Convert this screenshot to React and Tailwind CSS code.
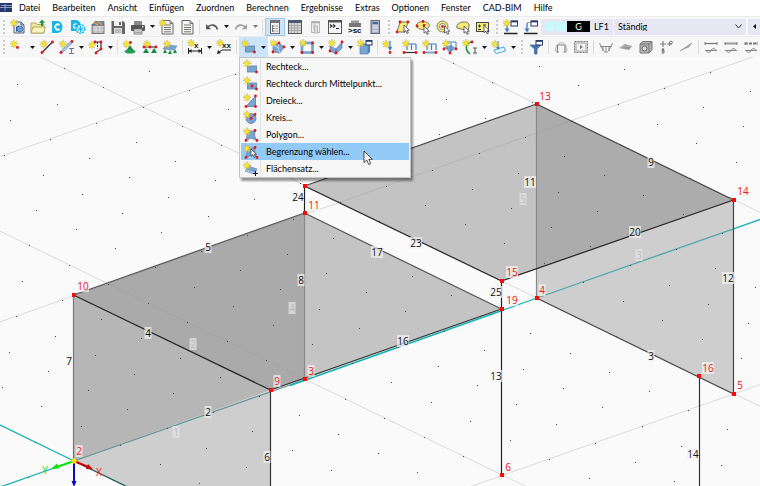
import React from "react";

/* ---------- small drawing helpers for icons ---------- */

const Icon = ({ children }) => (
  <svg width="16" height="16" viewBox="0 0 16 16" fill="none" className="shrink-0" aria-hidden="true">
    {children}
  </svg>
);

const Star = ({ x = 4, y = 4 }) => (
  <g transform={`translate(${x} ${y})`}>
    <path d="M0-4.2V4.2M-4.2 0H4.2M-3-3L3 3M3-3L-3 3" stroke="#b9b48a" strokeWidth="0.8" />
    <path d="M0-3.6L1-1.2 3.4-1 1.5.6 2.2 3 0 1.8-2.2 3-1.5.6-3.4-1-1-1.2Z" fill="#fbe62a" stroke="#e0c61c" strokeWidth="0.4" />
  </g>
);

const Dots = ({ at }) => at.map(([x, y]) => <circle key={`${x}-${y}`} cx={x} cy={y} r="1.4" fill="#e0161b" />);

const Hand = ({ x = 9, y = 7 }) => (
  <path transform={`translate(${x} ${y})`} d="M0 0V7.2L1.8 5.6 3 8.4 4.3 7.8 3.2 5.2H5.4Z" fill="#fff" stroke="#444" strokeWidth="0.8" />
);

const BLUE = "#79a5d2";
const DARK = "#5f7fa6";
const GREY = "#808080";

const NewModel = () => (
  <Icon>
    <path d="M4 3H11L14 6V14H4Z" fill="#dce6f3" stroke="#5c6370" />
    <path d="M11 3V6H14" stroke="#5c6370" />
    <path d="M6 8L9 6.5V11L6 13Z" fill="#2b5b9e" />
    <circle cx="10" cy="10" r="3" fill="#6f9bd0" stroke="#2b5b9e" strokeWidth="0.6" />
    <Star x={4} y={4} />
  </Icon>
);
const OpenFolder = () => (
  <Icon>
    <path d="M1 4H6L7 5.500H14V14H1Z" fill="#f2e7a4" stroke="#b5a85c" />
    <path d="M3 8H15.500L13.500 14H1Z" fill="#fbf3bd" stroke="#b5a85c" />
    <path d="M12 7V3" stroke="#1d9a3c" strokeWidth="2" />
    <path d="M9 4L12 .5 15 4Z" fill="#1d9a3c" />
  </Icon>
);
const CloudC = () => (
  <Icon>
    <path d="M2 2H8C14 3 14 13 8 14H2Z" fill="#19b5e5" />
    <path d="M9.500 6A2.600 2.600 0 1 0 9.500 10" stroke="#fff" strokeWidth="1.800" />
  </Icon>
);
const CloudGear = () => (
  <Icon>
    <path d="M1 1H6C9 1.500 11 4 11 7L8 12H1Z" fill="#19b5e5" />
    <path d="M6.500 5A2.300 2.300 0 1 0 6 9.500" stroke="#fff" strokeWidth="1.400" />
    <circle cx="10.500" cy="10" r="4.300" fill="#dff4fb" stroke="#19b5e5" strokeWidth="1.500" strokeDasharray="2 1" />
    <path d="M10.500 7V13M7.900 8.500L13.100 11.500M13.100 8.500L7.900 11.500" stroke="#19b5e5" />
  </Icon>
);
const ModelManager = () => (
  <Icon>
    <rect x="2" y="6" width="12" height="8.500" fill="#b9b9b9" stroke="#777" />
    <path d="M2 6L5 2.500H14V6Z" fill="#6d8bb3" stroke="#4d5f78" strokeWidth="0.700" />
    <path d="M4 3.500L8 6M8 2.500L12 6" stroke="#d99c3d" strokeWidth="1.500" />
    <path d="M3 8H14M3 11H14M6 7V14M10 7V14" stroke="#eee" strokeWidth="0.700" />
  </Icon>
);
const Save = () => (
  <Icon>
    <path d="M1.500 2H13L15 4V15H1.500Z" fill="#666" />
    <rect x="4" y="2" width="8" height="5" fill="#eee" />
    <rect x="4" y="9" width="8" height="6" fill="#ddd" />
    <rect x="9" y="3" width="2" height="3" fill="#666" />
    <path d="M5 11H11M5 13H11" stroke="#888" strokeWidth="0.800" />
  </Icon>
);
const Print = () => (
  <Icon>
    <rect x="4" y="2" width="8" height="4" fill="#8b8b8b" />
    <rect x="1" y="6" width="14" height="6" rx="1" fill="#555" />
    <rect x="4" y="10" width="8" height="5" fill="#ececec" stroke="#666" strokeWidth="0.800" />
    <path d="M5 12H11M5 13.500H11" stroke="#888" strokeWidth="0.700" />
    <rect x="12" y="7" width="1.500" height="1.500" fill="#ddd" />
  </Icon>
);
const Report = ({ star }) => (
  <Icon>
    <path d="M3 1.500H11L14 4.500V15H3Z" fill="#f5f5f3" stroke="#666" />
    <path d="M11 1.500V4.500H14M5 6H12M5 8.500H12M5 10.500H12M5 12.800H12" stroke="#666" strokeWidth="0.900" />
    {star && <Star x={3.5} y={4} />}
  </Icon>
);
const Undo = ({ flip }) => (
  <Icon>
    <g transform={flip ? "translate(16 0) scale(-1 1)" : undefined} opacity={flip ? 0.55 : 1}>
      <path d="M3.500 8.500C6 5 12 5 13.500 10.500" stroke="#555" strokeWidth="1.600" />
      <path d="M2 5V10.200H7.200Z" fill="#555" />
    </g>
  </Icon>
);
const Navigator = () => (
  <Icon>
    <rect x="3.500" y="1.500" width="9" height="13" fill="#f0f0f0" stroke="#666" />
    <rect x="3.500" y="1.500" width="9" height="2.500" fill="#777" />
    <path d="M5.500 6V13M6 7H7.500M6 9.500H7.500M6 12H7.500" stroke="#555" strokeWidth="0.800" />
    <path d="M8.500 7H11M8.500 9.500H11M8.500 12H11" stroke="#888" strokeWidth="0.800" />
  </Icon>
);
const TableIcon = () => (
  <Icon>
    <rect x="1.500" y="1.500" width="13" height="13" fill="#d8d8d8" stroke="#555" />
    <rect x="1.500" y="1.500" width="13" height="2.500" fill="#4b5a78" />
    <path d="M2 6.500H14M2 9H14M2 11.500H14M4.500 4V14M7.500 4V14M10.500 4V14" stroke="#999" strokeWidth="0.700" />
  </Icon>
);
const PanelIcon = () => (
  <Icon>
    <rect x="4.500" y="2.500" width="8" height="11" fill="#eee" stroke="#bbb" />
    <path d="M4.500 3.500H12.500" stroke="#aaa" strokeWidth="1.500" />
    <path d="M6 6H9M6 8H9M6 10H8" stroke="#bbb" />
    <rect x="7.500" y="7" width="3" height="7" fill="#ddd" stroke="#aaa" strokeWidth="0.700" />
  </Icon>
);
const ConsoleIcon = () => (
  <Icon>
    <rect x="1.500" y="1.500" width="13" height="13" fill="#f3f3f3" stroke="#555" />
    <rect x="1.500" y="1.500" width="13" height="2" fill="#555" />
    <path d="M3 5.500L5 7 3 8.500M6 5.500L8 7 6 8.500M9 9.500H12" stroke="#222" strokeWidth="1.100" />
  </Icon>
);
const ScriptIcon = () => (
  <Icon>
    <rect x="4" y="1.500" width="8" height="4" fill="#999" />
    <rect x="2" y="4" width="12" height="4" fill="#777" />
    <text x="1" y="14" fontSize="8" fontWeight="700" fill="#111" fontFamily="Liberation Sans, sans-serif">&gt;sc</text>
  </Icon>
);
const ServerIcon = () => (
  <Icon>
    <rect x="4" y="1.500" width="8.500" height="13" fill="#a7b3c2" stroke="#666" />
    <rect x="5.500" y="3" width="5.500" height="2" fill="#3f6da8" />
    <path d="M5.500 7H11M5.500 9H11M5.500 12H11" stroke="#eef" />
  </Icon>
);
const YELLOW = "#f6ec74";
const SelPara = () => (
  <Icon>
    <path d="M5 3H13L10 13H2Z" fill={YELLOW} stroke="#555" strokeWidth="0.800" />
    <Dots at={[[5, 3], [13, 3], [2, 13]]} />
    <Hand x={9} y={6} />
  </Icon>
);
const SelEllipse = () => (
  <Icon>
    <ellipse cx="8" cy="6.500" rx="6.500" ry="4" fill={YELLOW} stroke="#666" strokeWidth="0.800" />
    <Dots at={[[8, 2.5], [2, 7], [9, 6.5]]} />
    <Hand x={9} y={7} />
  </Icon>
);
const SelRing = () => (
  <Icon>
    <circle cx="7.500" cy="7.500" r="5.500" fill={YELLOW} stroke="#666" strokeWidth="0.800" />
    <circle cx="7.500" cy="7.500" r="3" fill="#fff" stroke="#666" strokeWidth="0.800" />
    <Dots at={[[7.5, 7.5]]} />
    <Hand x={9.5} y={7} />
  </Icon>
);
const SelLasso = () => (
  <Icon>
    <path d="M2 9C1 6 4 3.500 8 3 12 2.500 14.500 4 14 7L13 12 8 10.500Z" fill={YELLOW} stroke="#555" strokeWidth="0.800" />
    <Hand x={9} y={7} />
  </Icon>
);
const SelBox = () => (
  <Icon>
    <rect x="1.500" y="3.500" width="12" height="9" fill={YELLOW} stroke="#444" />
    <path d="M3 7H6M4.500 5.500V8.500M3 10.500H6M8 6H11" stroke="#333" />
    <Hand x={9} y={6.5} />
  </Icon>
);
const LoadIcon = ({ star }) => (
  <Icon>
    <path d="M1 14.500H14.500" stroke="#222" strokeWidth="1.500" />
    <path d="M4 4V11" stroke="#3f7fca" strokeWidth="1.300" />
    <path d="M1.500 9.500H6.500L4 13.500Z" fill="#3f7fca" />
    <rect x="8" y="2" width="6.500" height="5" fill="#fff" stroke="#283b6b" />
    <path d="M8 2.500H14.500" stroke="#283b6b" strokeWidth="1.800" />
    <path d="M4 3.500H8" stroke="#666" strokeWidth="0.600" />
    {star && <Star x={3.5} y={4} />}
  </Icon>
);

const NodeIcon = () => (<Icon><Star x={4} y={5} /><Dots at={[[7.500, 8.500]]} /></Icon>);
const LineIcon = () => (
  <Icon><path d="M3 13.500L13.500 3" stroke="#333" strokeWidth="1.200" /><Star x={5} y={5} /><Dots at={[[3, 13.5], [13.5, 3]]} /></Icon>
);
const MemberIcon = () => (
  <Icon>
    <path d="M2 13.500L12.500 3" stroke="#7ba0d3" strokeWidth="3" />
    <path d="M2 13.500L12.500 3" stroke="#d7e5f6" />
    <path d="M10 9.500H15M12.500 9.500V14.500M10 14.500H15" stroke="#5d7fae" />
    <Star x={4} y={5} /><Dots at={[[2, 13.5], [13, 2.5]]} />
  </Icon>
);
const PolylineIcon = () => (
  <Icon>
    <path d="M6 3H13V10L8 13.500" stroke="#333" strokeWidth="1.200" />
    <path d="M9.500 3V9.500" stroke="#333" strokeDasharray="2 1" />
    <Star x={4} y={6} /><Dots at={[[7, 3], [13, 3], [13, 10], [8, 14]]} />
  </Icon>
);
const NodalSupport = () => (
  <Icon><path d="M8 6L12 12H4Z" fill="#188a45" /><ellipse cx="8" cy="12.500" rx="5.500" ry="2" fill="#1e9e50" /><Star x={4.500} y={5} /><Dots at={[[8.5, 3.5]]} /></Icon>
);
const LineSupport = () => (
  <Icon><path d="M2 8H14" stroke="#222" /><path d="M4 9L7 14H1ZM12 9L15 14H9Z" fill="#188a45" /><Star x={5} y={5} /><Dots at={[[2, 8], [14, 8], [8, 8]]} /></Icon>
);
const SurfaceSupport = () => (
  <Icon><path d="M4 6L15 7 12 11 1 10Z" fill={BLUE} stroke={DARK} strokeWidth="0.600" /><path d="M3 10L5 14H1ZM8 11L10 15H6ZM13 10L15 14H11Z" fill="#188a45" /><Star x={5} y={5} /></Icon>
);
const DimX = () => (
  <Icon><path d="M1.500 9V15M14.500 9V15M2 12H14" stroke="#222" /><path d="M1.500 12L4.500 10V14ZM14.500 12L11.500 10V14Z" fill="#222" /><text x="7" y="9" fontSize="8" fontWeight="700" fill="#222" fontFamily="Liberation Sans, sans-serif">x</text><Star x={4} y={4} /></Icon>
);
const DimXX = () => (
  <Icon><path d="M2 14L6 11H15" stroke="#222" /><path d="M1 15L2 11 5 14Z" fill="#222" /><text x="6" y="9" fontSize="8" fontWeight="700" fill="#222" fontFamily="Liberation Sans, sans-serif">xx</text><Star x={4} y={4} /></Icon>
);
const SurfRect = () => (
  <Icon><rect x="4.500" y="7" width="9" height="6" fill={BLUE} stroke={DARK} strokeWidth="0.800" /><Star x={4} y={4.500} /><Dots at={[[13.5, 13]]} /></Icon>
);
const SurfCenter = () => (
  <Icon><rect x="4.500" y="7" width="9" height="6" fill={BLUE} stroke={DARK} strokeWidth="0.800" /><Star x={4} y={4.500} /><Dots at={[[9, 10], [13.5, 13]]} /></Icon>
);
const SurfTri = () => (
  <Icon><path d="M12.500 3V13.500H3Z" fill={BLUE} stroke={DARK} strokeWidth="0.800" /><Star x={4} y={4.500} /><Dots at={[[12.5, 3], [12.5, 13.5], [3, 13.5]]} /></Icon>
);
const SurfCircle = () => (
  <Icon><circle cx="8" cy="8.500" r="5" fill={BLUE} stroke={DARK} strokeWidth="0.800" /><path d="M8 8.500L12 4.500" stroke="#456" strokeWidth="0.700" /><Star x={4} y={4.500} /><Dots at={[[8, 8.5], [12, 4.5]]} /></Icon>
);
const SurfPoly = ({ pick }) => (
  <Icon>
    <path d="M5 4H12L11.500 9 14 13.500 8 11 3 13.500Z" fill={BLUE} stroke={DARK} strokeWidth="0.800" />
    <Star x={4} y={4.500} /><Dots at={[[12, 3.5], [14, 13.5], [3, 13.5]]} />
    {pick && <Hand x={8} y={5} />}
  </Icon>
);
const SurfSet = () => (
  <Icon><path d="M5 5L14 8 12 12 3 9Z" fill={BLUE} stroke={DARK} strokeWidth="0.600" /><path d="M4 8L13 11 11 13 2 10Z" fill="#a8c6e6" stroke={DARK} strokeWidth="0.600" /><path d="M10 12.500H15M12.500 10V15" stroke="#111" /><Star x={4} y={4.500} /></Icon>
);
const Solid = () => (
  <Icon><path d="M3 6L9 4 14 8 10 14 3 13Z" fill={BLUE} stroke={DARK} strokeWidth="0.700" /><path d="M9 4L8 9 10 14M8 9L3 6" stroke="#d7e5f6" strokeWidth="0.700" /><Star x={3.500} y={4} /><Dots at={[[9, 4], [14, 8], [3, 13]]} /></Icon>
);
const Opening = () => (
  <Icon><rect x="3" y="4" width="10.500" height="9.500" fill="#fff" stroke={BLUE} strokeWidth="2.800" /><Star x={4} y={4} /><Dots at={[[13.5, 4], [13.5, 13.5], [3, 13.5]]} /></Icon>
);
const Intersect = () => (
  <Icon><path d="M2 7L8 10V15L2 12ZM8 10L14 3V9L8 15Z" fill={BLUE} stroke={DARK} strokeWidth="0.700" /><Star x={4} y={4} /><Dots at={[[14, 3], [8, 14], [2, 12]]} /></Icon>
);
const Block = () => (
  <Icon><path d="M3 7L5 5H13L11 7V15H3Z" fill={BLUE} stroke={DARK} strokeWidth="0.700" /><path d="M11 7L13 5V13L11 15Z" fill="#4d7fb8" /><rect x="9" y="1.500" width="6" height="4.500" fill="#fff" stroke="#283b6b" /><path d="M9 2H15" stroke="#283b6b" strokeWidth="1.600" /><Star x={3.500} y={4} /></Icon>
);
const NodeLoad = () => (
  <Icon><path d="M8 2V10" stroke="#3f7fca" strokeWidth="1.300" /><path d="M5.800 8H10.200L8 12Z" fill="#3f7fca" /><Star x={4} y={5} /><Dots at={[[8, 13.5]]} /></Icon>
);
const LineLoad = ({ blue }) => (
  <Icon><path d="M3 5H14M5 5V11M9.500 5V11M14 5V11" stroke="#3f7fca" strokeWidth="1.200" /><path d="M2 13.500H14" stroke={blue ? BLUE : "#333"} strokeWidth={blue ? 2 : 1.200} /><Star x={4} y={4.500} /><Dots at={[[2, 13.5], [14, 13.5]]} /></Icon>
);
const SurfLoad = () => (
  <Icon><path d="M2 8L9 6 14 9 8 14Z" fill={BLUE} /><path d="M5 3H14V11M9 4V12M5 4V10" stroke="#3f7fca" /><Star x={4} y={4.500} /><Dots at={[[14, 10], [8, 14], [2, 10]]} /></Icon>
);
const Imperfection = () => (
  <Icon><path d="M9 3C3 5 3 11 8 15" stroke="#1d8f45" strokeWidth="1.600" /><path d="M11 9H15M13 9V14M11 14H15" stroke="#555" /><Star x={4} y={4} /><Dots at={[[10, 3]]} /></Icon>
);
const FreeLoad = () => (
  <Icon><path d="M3 11L13 8 14.500 12 5 14.500Z" stroke="#4da6da" fill="#eaf6fd" /><path d="M7 2V9" stroke="#3f7fca" strokeWidth="1.200" /><path d="M5 8H9L7 11Z" fill="#3f7fca" /><Star x={4} y={5} /></Icon>
);
const Filter = () => (
  <Icon><path d="M2 6H13L9 10V15H6.500V10Z" fill="#3f74b8" stroke="#2d578d" strokeWidth="0.600" /><rect x="8" y="1.500" width="6.500" height="4.500" fill="#fff" stroke="#283b6b" /><path d="M8 2H14.500" stroke="#283b6b" strokeWidth="1.700" /></Icon>
);
const Frame = () => (<Icon><path d="M4.500 13V6H12V13M3 13H6M10.500 13H13.500" stroke={GREY} strokeWidth="1.100" /><path d="M2.500 12C2.500 1 14 1 14 12" stroke="#aaa" strokeWidth="0.900" /></Icon>);
const Film = () => (<Icon><rect x="1.500" y="2.500" width="13" height="11" fill="#c9c9c9" stroke={GREY} strokeDasharray="2 1" /><rect x="4" y="5" width="8" height="6" fill="#f4f4f4" /><path d="M7 5.800V10.200L10 8Z" fill={GREY} /></Icon>);
const Curve = () => (<Icon><path d="M1.500 4L5 11C6.500 14 9.500 14 11 11L14.500 4M2 7.500H14M5 7V12M8 8V13M11 7V12" stroke={GREY} strokeWidth="0.900" /></Icon>);
const SurfGrey = () => (<Icon><path d="M1 9L7 5 14 7 11 11Z" fill="#999" /><path d="M1 9L7 7 14 7" stroke="#ccc" strokeWidth="0.700" /></Icon>);
const CubeGrey = () => (<Icon><path d="M2 5L5 2.500H14V11L11 14H2Z" fill="#b5b5b5" stroke="#777" /><path d="M2 5H11V14M11 5L14 2.500" stroke="#777" /><circle cx="6.500" cy="9.500" r="2.500" fill="#ddd" stroke="#666" /></Icon>);
const Reactions = () => (<Icon><path d="M5 2V8M2 5H8M3.500 13H7M5 9V15M9 5H14M11.500 3V7" stroke={GREY} strokeWidth="1.200" /><circle cx="5" cy="11" r="1.500" fill={GREY} /><circle cx="13" cy="3.500" r="1.400" stroke={GREY} /></Icon>);
const Slope = () => (<Icon><path d="M2 12L14 4 11 8.500Z" fill="#aaa" /><path d="M2 12L14 4" stroke="#888" strokeWidth="0.800" /></Icon>);
const Diagram = ({ kind }) => (
  <Icon>
    <path d="M2 4.500H14" stroke={kind === 2 ? "#999" : "#777"} strokeWidth={kind === 1 ? 1.200 : 2} strokeDasharray={kind === 3 ? "3 1" : undefined} />
    <path d="M2 3V6M14 3V6M2 11.500H14M3 11.500C5 14 7 14 8 11.500 9 9 12 9 13 11.500" stroke="#808080" />
  </Icon>
);

/* ---------- toolbar parts ---------- */

const Btn = ({ label, icon, active }) => (
  <button
    type="button"
    aria-label={label}
    className={`flex h-[18px] w-5 shrink-0 items-center justify-center ${active ? "border border-[#99c9f0] bg-[#cce4f7]" : "hover:bg-[#e5f1fb]"}`}
  >
    {icon}
  </button>
);
const Caret = ({ muted }) => (
  <button type="button" aria-label="Mehr" className="flex h-[18px] w-[9px] shrink-0 items-center justify-center">
    <svg width="5" height="3" viewBox="0 0 5 3" aria-hidden="true"><path d="M0 0H5L2.500 3Z" fill={muted ? "#777" : "#111"} /></svg>
  </button>
);
const Sep = () => (
  <div className="flex h-[18px] w-[5px] shrink-0 justify-center py-0.5"><div className="w-px bg-[#dcdcdc]" /></div>
);
const Grip = () => <div className="mx-[3px] h-3.5 w-0.5 shrink-0 border-l-2 border-dotted border-[#cacaca]" />;

const MENU = ["Datei", "Bearbeiten", "Ansicht", "Einfügen", "Zuordnen", "Berechnen", "Ergebnisse", "Extras", "Optionen", "Fenster", "CAD-BIM", "Hilfe"];

const DROPDOWN = [
  ["Rechteck...", <SurfRect />],
  ["Rechteck durch Mittelpunkt...", <SurfCenter />],
  ["Dreieck...", <SurfTri />],
  ["Kreis...", <SurfCircle />],
  ["Polygon...", <SurfPoly />],
  ["Begrenzung wählen...", <SurfPoly pick />],
  ["Flächensatz...", <SurfSet />],
];

function SurfaceMenu() {
  return (
    <div role="menu" className="absolute left-0 top-full z-10 w-[172px] border border-[#c4c4c4] bg-[#f6f6f6] px-px shadow-[2px_3px_2px_rgba(0,0,0,0.4)]">
      {DROPDOWN.map(([text, icon], i) => (
        <button
          key={text}
          type="button"
          role="menuitem"
          className={`flex h-[17px] w-full items-center whitespace-nowrap text-left ${i === 5 ? "bg-[#91c9f7]" : ""}`}
        >
          <span className={`flex h-full w-5 items-center justify-center border-r ${i === 5 ? "border-transparent" : "border-[#e2e2e2]"}`}>{icon}</span>
          <span className="pl-[5px]">{text}</span>
        </button>
      ))}
      <svg width="10" height="16" viewBox="0 0 10 16" className="absolute left-[123px] top-[92px]" aria-hidden="true">
        <path d="M1 1V12.500L3.700 10 5.700 14.500 7.700 13.600 5.800 9.300H9.300Z" fill="#fff" stroke="#333" strokeWidth="0.900" />
      </svg>
    </div>
  );
}

/* ---------- model view ---------- */

const ORIGIN = [74, 461];
const U = [46.3, -16.3];
const V = [39.45, 19.15];
const point = (a, b) => [ORIGIN[0] + a * U[0] + b * V[0], ORIGIN[1] + a * U[1] + b * V[1]];

const gridDots = [];
for (let a = -15; a <= 25; a++) {
  for (let b = -20; b <= 15; b++) {
    const [x, y] = point(a, b);
    if (x > 0 && x < 1600 && y > 50 && y < 1000) gridDots.push([Math.round(x), Math.round(y)]);
  }
}
const gridLine = (p, q) => ({ x1: p[0], y1: p[1], x2: q[0], y2: q[1] });
const gridLines = [
  ...[-15, -10, -5, 5, 10].map((b) => gridLine(point(-20, b), point(30, b))),
  ...[-5, 5, 10, 15, 20].map((a) => gridLine(point(a, -25), point(a, 20))),
];

const FACES = [
  ["74,295 305,213 305,379 271,390", "#aaa"],
  ["74,295 271,390 74,461", "#b6b6b6"],
  ["305,213 502,309 305,379", "#c4c4c4"],
  ["74,461 271,390 271,557", "#cecece"],
  ["305,186 537,104 537,269 502,281", "#c3c3c3"],
  ["537,104 734,200 537,269", "#acacac"],
  ["537,269 734,200 734,394 537,298", "#cecece"],
];

const EDGES = [
  ["74,295 305,213", "#555"], ["74,295 74,461", "#777"], ["74,295 271,390", "#222"],
  ["305,213 305,379", "#888"], ["305,213 502,309", "#555"], ["271,390 502,309", "#333"],
  ["271,390 271,557", "#333"], ["305,186 305,213", "#222"], ["305,186 502,281", "#222"],
  ["305,186 537,104", "#444"], ["537,104 537,298", "#888"], ["537,104 734,200", "#444"],
  ["502,281 734,200", "#222"], ["502,281 502,475", "#222"], ["734,200 734,394", "#444"],
  ["537,298 734,394", "#444"], ["700,376 700,900", "#333"],
];

const EDGE_LABELS = [
  ["5", 208, 247], ["4", 148, 333], ["7", 69, 361], ["8", 301, 280], ["24", 298, 197], ["17", 377, 252],
  ["23", 416, 243], ["25", 496, 292], ["16", 403, 341], ["13", 496, 376], ["6", 267, 457], ["2", 208, 412],
  ["11", 530, 182], ["9", 651, 162], ["20", 635, 232], ["12", 728, 278], ["3", 651, 356], ["14", 693, 454],
];
const FACE_LABELS = [["2", 193, 344], ["4", 292, 308], ["5", 523, 199], ["3", 639, 255], ["1", 176, 432]];
const NODES = [
  ["10", 83, 286, 74, 295], ["11", 314, 205, 305, 213], ["9", 277, 381, 271, 390],
  ["3", 311, 371, 305, 379], ["13", 545, 96, 537, 104], ["14", 743, 191, 734, 200], ["15", 512, 272, 502, 281],
  ["19", 512, 300, 502, 309], ["4", 542, 290, 537, 298], ["16", 708, 368, 699, 376], ["5", 740, 385, 734, 394],
  ["6", 508, 467, 502, 475], ["2", 79, 451, 74, 461],
];

const NodeMark = ({ x, y }) => <rect x={x - 2} y={y - 2} width="4" height="4" fill="#f50d0d" />;

const Tag = ({ text, x, y, color, box = "#f2f2f2" }) => {
  const w = text.length * 5 + 2;
  return (
    <g>
      <rect x={x - w / 2} y={y - 6} width={w} height="12" fill={box} opacity="0.72" />
      <text x={x} y={y + 4} textAnchor="middle" fill={color}>{text}</text>
    </g>
  );
};

function ModelView() {
  return (
    <main className="min-h-0 flex-1 overflow-hidden bg-[#fafafa]">
      <svg width="100%" height="100%" role="img" aria-label="Modellansicht" fontSize="10" fontFamily="'Open Sans', 'Noto Sans', sans-serif">
        <g transform="translate(0 -57)">
          {FACES.map(([pts, fill]) => <polygon key={pts} points={pts} fill={fill} />)}
          <g stroke="#999" strokeOpacity="0.33">
            {gridLines.map((l, i) => <line key={i} {...l} />)}
          </g>
          <g stroke="#16b2b4" strokeWidth="1.3">
            <line {...gridLine(point(-10, 0), point(0, 0))} />
            <line {...gridLine(point(0, -10), point(0, 0))} />
            <line {...gridLine(point(0, 0), point(5, 0))} stroke="#5f9393" />
            <line {...gridLine(point(0, 0), point(0, 10))} stroke="#235a5a" />
            <line {...gridLine(point(10, 0), point(14.26, 0))} stroke="#4fa9a9" />
            <line {...gridLine(point(14.26, 0), point(30, 0))} />
            <line x1="290" y1="385.500" x2="502" y2="310.500" strokeWidth="1.8" />
            <line x1="502" y1="310.500" x2="537" y2="298" />
          </g>
          {gridDots.map(([x, y]) => <rect key={`${x},${y}`} x={x} y={y} width="1" height="1" fill="#444" />)}
          <g transform="translate(-0.5 0)" strokeWidth="1.2" fill="none">
            {EDGES.map(([pts, stroke]) => <polyline key={pts} points={pts} stroke={stroke} />)}
          </g>
          {FACE_LABELS.map(([t, x, y]) => <Tag key={t} text={t} x={x} y={y} color="#bdbdbd" box="#e4e4e4" />)}
          {EDGE_LABELS.map(([t, x, y]) => <Tag key={t} text={t} x={x} y={y} color="#111" />)}
          <NodeMark x={305} y={186} />
          {NODES.map(([t, x, y, nx, ny]) => (
            <g key={t}>
              <Tag text={t} x={x} y={y} color="#f01818" />
              <NodeMark x={nx} y={ny} />
            </g>
          ))}
          <path d="M74 461L57 467" stroke="#0be00b" strokeWidth="2" />
          <path d="M51 469L57 463.500 59 468.500Z" fill="#0be00b" />
          <path d="M74 461L88 467" stroke="#c80000" strokeWidth="2" />
          <path d="M93 469.500L88 464 86 469Z" fill="#c80000" />
          <path d="M74 461V481" stroke="#0a0ac0" strokeWidth="2" />
          <path d="M71.500 481H76.500L74 487Z" fill="#0a0ac0" />
          <circle cx="74" cy="461" r="2.600" fill="#ffe500" />
          <text x="45" y="474" textAnchor="middle" fill="#0be00b">Y</text>
          <text x="99" y="476" textAnchor="middle" fill="#f01818">X</text>
        </g>
      </svg>
    </main>
  );
}

export default function App() {
  return (
    <div className="flex h-screen flex-col overflow-hidden bg-[#f7f7f7] font-['Lato','Open_Sans',sans-serif] text-[9px] leading-none text-black">
      <nav className="flex h-[17px] shrink-0 items-center gap-3 border-b border-[#ececec] bg-white pb-px whitespace-nowrap">
        <svg width="13" height="9" viewBox="0 0 13 9" className="-mr-[6px] shrink-0" aria-hidden="true">
          <rect width="12" height="9" fill="#24366e" />
          <path d="M0 4.500H12M5 1V8M1 2.500H12" stroke="#aab4d6" strokeWidth="0.800" />
        </svg>
        {MENU.map((m) => <button key={m} type="button">{m}</button>)}
      </nav>

      <div className="flex h-5 shrink-0 items-center border-b border-[#ececec]">
        <Grip />
        <Btn label="Neues Modell" icon={<NewModel />} />
        <Btn label="Öffnen" icon={<OpenFolder />} />
        <Btn label="Dlubal Center" icon={<CloudC />} />
        <Btn label="Cloud-Einstellungen" icon={<CloudGear />} />
        <Btn label="Modelle verwalten" icon={<ModelManager />} />
        <Btn label="Speichern" icon={<Save />} />
        <Btn label="Drucken" icon={<Print />} />
        <Caret />
        <Btn label="Neues Protokoll" icon={<Report star />} />
        <Btn label="Protokoll" icon={<Report />} />
        <Sep />
        <Btn label="Rückgängig" icon={<Undo />} />
        <Caret />
        <Btn label="Wiederherstellen" icon={<Undo flip />} />
        <Caret muted />
        <Sep />
        <Btn label="Navigator" icon={<Navigator />} active />
        <Btn label="Tabellen" icon={<TableIcon />} />
        <Btn label="Panel" icon={<PanelIcon />} />
        <Btn label="Konsole" icon={<ConsoleIcon />} />
        <Btn label="Skript" icon={<ScriptIcon />} />
        <Btn label="Server" icon={<ServerIcon />} />
        <Grip />
        <Btn label="Auswahl Parallelogramm" icon={<SelPara />} />
        <Btn label="Auswahl Ellipse" icon={<SelEllipse />} />
        <Btn label="Auswahl Ring" icon={<SelRing />} />
        <Btn label="Auswahl Lasso" icon={<SelLasso />} />
        <Btn label="Auswahl Fenster" icon={<SelBox />} />
        <Grip />
        <Btn label="Neuer Lastfall" icon={<LoadIcon star />} />
        <Btn label="Lastfälle" icon={<LoadIcon />} />
        <div className="relative flex h-4 min-w-0 flex-1 items-center bg-[#e7e7f3] pl-1">
          <span className="h-[9px] w-[9px] shrink-0 bg-[#c3fbff]" />
          <span className="ml-0.5 h-[9px] w-[9px] shrink-0 bg-[#c3fbff]" />
          <span className="ml-0.5 flex h-[11px] w-[23px] shrink-0 items-center justify-center bg-black text-white">G</span>
          <label htmlFor="loadcase" className="ml-1 flex h-full w-5 shrink-0 items-center border-r border-[#f6f6fb]">LF1</label>
          <select id="loadcase" className="h-full min-w-0 flex-1 appearance-none bg-transparent pl-1 outline-none">
            <option>Ständig</option>
          </select>
          <svg width="7" height="5" viewBox="0 0 7 5" className="mr-1 shrink-0" fill="none" aria-hidden="true"><path d="M.5 .5L3.500 4 6.500 .5" stroke="#333" /></svg>
        </div>
        <button type="button" aria-label="Vorheriger Lastfall" className="ml-0.5 flex h-4 w-3 shrink-0 items-center justify-center bg-[#e7e7f3]">
          <svg width="3" height="5" viewBox="0 0 3 5" aria-hidden="true"><path d="M3 0V5L0 2.500Z" fill="#111" /></svg>
        </button>
      </div>

      <div className="flex h-5 shrink-0 items-center">
        <Grip />
        <Btn label="Knoten" icon={<NodeIcon />} />
        <Caret />
        <Btn label="Linie" icon={<LineIcon />} />
        <Btn label="Stab" icon={<MemberIcon />} />
        <Caret />
        <Btn label="Polylinie" icon={<PolylineIcon />} />
        <Caret />
        <Sep />
        <Btn label="Knotenlager" icon={<NodalSupport />} />
        <Btn label="Linienlager" icon={<LineSupport />} />
        <Btn label="Flächenlager" icon={<SurfaceSupport />} />
        <Sep />
        <Btn label="Bemaßung" icon={<DimX />} />
        <Caret />
        <Btn label="Notiz" icon={<DimXX />} />
        <Sep />
        <div className="relative flex h-5 shrink-0 items-center bg-[#cce4f7]">
          <Btn label="Fläche" icon={<SurfRect />} />
          <Caret />
          <SurfaceMenu />
        </div>
        <Btn label="Volumen" icon={<Solid />} />
        <Caret />
        <Btn label="Öffnung" icon={<Opening />} />
        <Caret />
        <Btn label="Durchdringung" icon={<Intersect />} />
        <Caret />
        <Btn label="Block" icon={<Block />} />
        <Sep />
        <Btn label="Knotenlast" icon={<NodeLoad />} />
        <Btn label="Linienlast" icon={<LineLoad />} />
        <Btn label="Stablast" icon={<LineLoad blue />} />
        <Btn label="Flächenlast" icon={<SurfLoad />} />
        <Btn label="Imperfektion" icon={<Imperfection />} />
        <Caret />
        <Btn label="Freie Last" icon={<FreeLoad />} />
        <Caret />
        <Grip />
        <Btn label="Filter" icon={<Filter />} />
        <Sep />
        <Btn label="Verformung" icon={<Frame />} />
        <Btn label="Animation" icon={<Film />} />
        <Sep />
        <Btn label="Stabergebnisse" icon={<Curve />} />
        <Btn label="Flächenergebnisse" icon={<SurfGrey />} />
        <Btn label="Volumenergebnisse" icon={<CubeGrey />} />
        <Btn label="Reaktionen" icon={<Reactions />} />
        <Btn label="Schnitte" icon={<Slope />} />
        <Sep />
        <Btn label="Verlauf Linie" icon={<Diagram kind={1} />} />
        <Btn label="Verlauf Fläche" icon={<Diagram kind={2} />} />
        <Btn label="Verlauf Schnitt" icon={<Diagram kind={3} />} />
      </div>

      <ModelView />
    </div>
  );
}
